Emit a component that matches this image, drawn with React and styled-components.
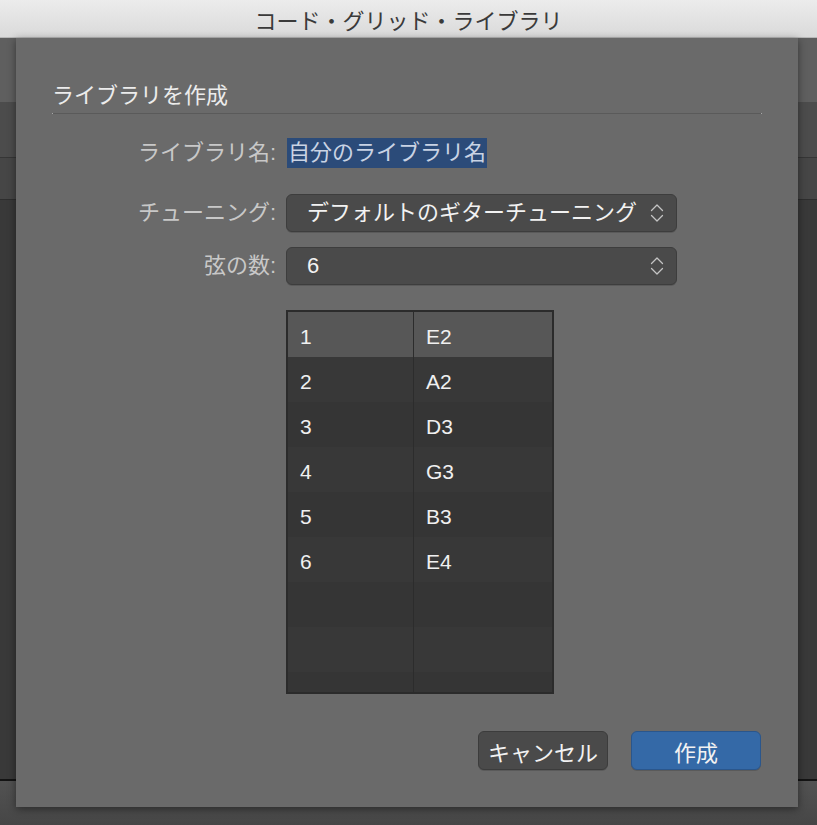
import React from "react";
import styled, { createGlobalStyle } from "styled-components";

const GlobalStyle = createGlobalStyle`
  html, body {
    margin: 0;
    padding: 0;
    background: #3a3a3a;
  }
  body {
    font-family: "Liberation Sans", "Noto Sans CJK JP", sans-serif;
    -webkit-font-smoothing: antialiased;
  }
`;

const Window = styled.div`
  position: relative;
  width: 817px;
  height: 825px;
  display: flex;
  flex-direction: column;
  overflow: hidden;
`;

const TitleBar = styled.div`
  height: 38px;
  flex: none;
  display: flex;
  align-items: center;
  justify-content: center;
  background: linear-gradient(#ececec, #dadada);
  border-bottom: 1px solid #b8b8b8;
  box-sizing: border-box;
  color: #3a3a3a;
  font-size: 22px;
`;

const Strip = styled.div`
  flex: none;
  height: ${(p) => p.$h}px;
  background: ${(p) => p.$bg};
  border-bottom: ${(p) => (p.$line ? `1px solid ${p.$line}` : "none")};
  box-sizing: border-box;
`;

const MainArea = styled.div`
  flex: none;
  height: 581px;
  background: #393939;
  border-bottom: 2px solid #141414;
  box-sizing: border-box;
`;

const Footer = styled.div`
  flex: 1;
  background: linear-gradient(#525252, #464646);
`;

const Sheet = styled.div`
  position: absolute;
  top: 38px;
  left: 16px;
  width: 782px;
  height: 769px;
  box-sizing: border-box;
  background: #6a6a6a;
  box-shadow: 0 2px 8px rgba(0, 0, 0, 0.45);
  padding: 44px 36px 37px;
  display: flex;
  flex-direction: column;
`;

const Heading = styled.div`
  font-size: 22px;
  line-height: 27px;
  color: #ececec;
`;

const Separator = styled.div`
  margin-top: 4px;
  height: 1px;
  background: #5a5a5a;
  border-left: 1px solid #a8a8a8;
  border-right: 1px solid #a8a8a8;
`;

const Form = styled.div`
  margin-top: 24px;
  display: flex;
  flex-direction: column;
`;

const FieldRow = styled.div`
  display: grid;
  grid-template-columns: 224px 391px;
  column-gap: 10px;
  align-items: center;
  margin-top: ${(p) => p.$gap || 0}px;
`;

const Label = styled.div`
  text-align: right;
  font-size: 22px;
  line-height: 30px;
  color: #c8c8c8;
  white-space: nowrap;
`;

const NameField = styled.div`
  display: flex;
  height: 30px;
  align-items: center;
  margin-left: 1px;
`;

const Selection = styled.span`
  background: #2b4b79;
  color: #c9d3e4;
  font-size: 22px;
  line-height: 30px;
  padding: 0 1px 0 1px;
  white-space: nowrap;
`;

const Popup = styled.div`
  height: 38px;
  box-sizing: border-box;
  border: 1px solid #3d3d3d;
  border-radius: 6px;
  background: #4a4a4a;
  box-shadow: 0 1px 0 rgba(0, 0, 0, 0.15);
  display: flex;
  align-items: center;
  justify-content: space-between;
  padding: 0 12px 0 20px;
  color: #f2f2f2;
  font-size: 22px;
  line-height: 30px;
  white-space: nowrap;
`;

const TableWrap = styled.div`
  margin: 25px 0 0 234px;
  width: 268px;
  height: 384px;
  box-sizing: border-box;
  border: 2px solid #2b2b2b;
  background: #363636;
  display: flex;
  flex-direction: column;
  overflow: hidden;
`;

const TRow = styled.div`
  flex: none;
  height: 45px;
  display: grid;
  grid-template-columns: 126px 1fr;
  background: ${(p) => (p.$selected ? "#575757" : p.$odd ? "#383838" : "#353535")};
`;

const Cell = styled.div`
  display: flex;
  align-items: center;
  padding: 4px 0 0 12px;
  box-sizing: border-box;
  font-size: 21px;
  color: #f0f0f0;
  border-right: ${(p) => (p.$first ? "1px solid #2c2c2c" : "none")};
`;

const Buttons = styled.div`
  margin-top: auto;
  display: flex;
  justify-content: flex-end;
  gap: 23px;
  padding-right: 1px;
`;

const Button = styled.div`
  width: 130px;
  height: 39px;
  box-sizing: border-box;
  border-radius: 6px;
  border: 1px solid ${(p) => (p.$primary ? "#2a568c" : "#3c3c3c")};
  background: ${(p) => (p.$primary ? "#3469a7" : "#4a4a4a")};
  box-shadow: 0 1px 0 rgba(0, 0, 0, 0.15);
  display: flex;
  align-items: center;
  justify-content: center;
  color: #f2f2f2;
  font-size: 22px;
`;

const Stepper = () => (
  <svg width="14" height="20" viewBox="0 0 14 20" fill="none">
    <path d="M1.5 7.5 L7 2 L12.5 7.5" stroke="#c4c4c4" strokeWidth="1.3" strokeLinecap="round" strokeLinejoin="round" />
    <path d="M1.5 12.5 L7 18 L12.5 12.5" stroke="#c4c4c4" strokeWidth="1.3" strokeLinecap="round" strokeLinejoin="round" />
  </svg>
);

const tuning = [
  ["1", "E2"],
  ["2", "A2"],
  ["3", "D3"],
  ["4", "G3"],
  ["5", "B3"],
  ["6", "E4"],
  ["", ""],
  ["", ""],
  ["", ""],
];

export default function App() {
  return (
    <>
      <GlobalStyle />
      <Window>
        <TitleBar>コード・グリッド・ライブラリ</TitleBar>
        <Strip $h={64} $bg="#5f5f5f" />
        <Strip $h={56} $bg="#4c4c4c" $line="#363636" />
        <Strip $h={42} $bg="#464646" $line="#2e2e2e" />
        <MainArea />
        <Footer />

        <Sheet>
          <Heading>ライブラリを作成</Heading>
          <Separator />
          <Form>
            <FieldRow>
              <Label>ライブラリ名:</Label>
              <NameField>
                <Selection>自分のライブラリ名</Selection>
              </NameField>
            </FieldRow>
            <FieldRow $gap={26}>
              <Label>チューニング:</Label>
              <Popup>
                <span>デフォルトのギターチューニング</span>
                <Stepper />
              </Popup>
            </FieldRow>
            <FieldRow $gap={15}>
              <Label>弦の数:</Label>
              <Popup>
                <span>6</span>
                <Stepper />
              </Popup>
            </FieldRow>
          </Form>
          <TableWrap>
            {tuning.map(([n, note], i) => (
              <TRow key={i} $selected={i === 0} $odd={i % 2 === 1}>
                <Cell $first>{n}</Cell>
                <Cell>{note}</Cell>
              </TRow>
            ))}
          </TableWrap>
          <Buttons>
            <Button>キャンセル</Button>
            <Button $primary>作成</Button>
          </Buttons>
        </Sheet>
      </Window>
    </>
  );
}
